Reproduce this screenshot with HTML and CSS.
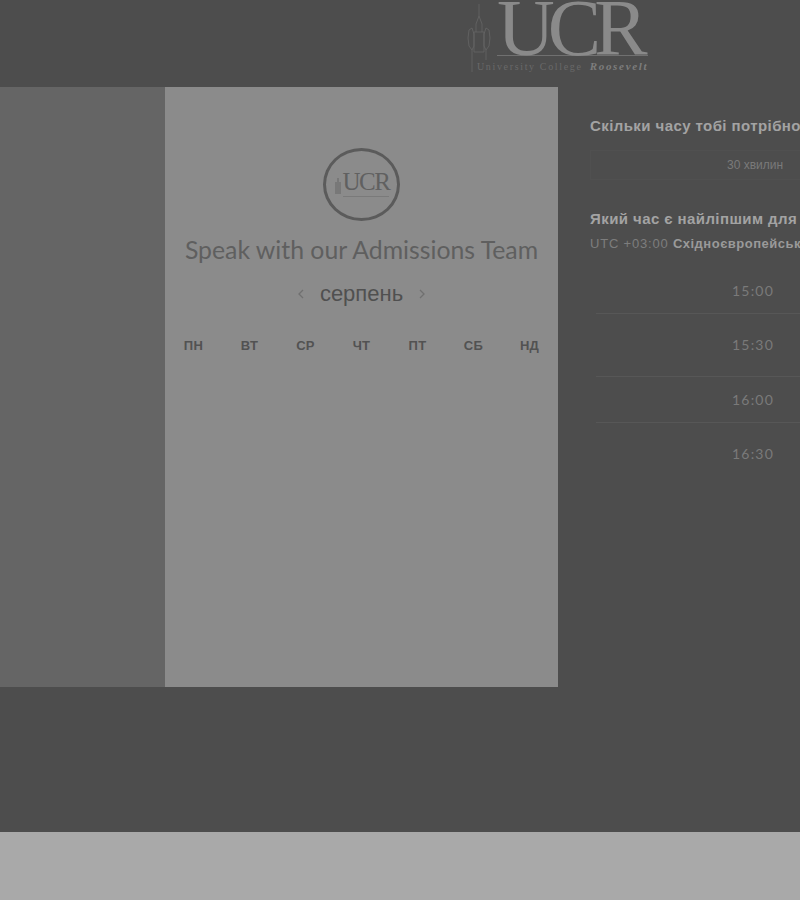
FILE: index.html
```html
<!DOCTYPE html>
<html lang="uk">
<head>
    <meta charset="UTF-8">
    <meta name="viewport" content="width=device-width, initial-scale=1.0">
    <title>Speak with our Admissions Team</title>
    <link rel="stylesheet" href="styles.css">
</head>
<body>
    <!-- Top bar with logo -->
    <header class="site-header">
        <div class="logo">
            <svg class="logo-tower" width="28" height="72" viewBox="0 0 28 72" fill="none" stroke="#666" stroke-width="0.8">
                <path d="M12 2V14M9 22L12 14L15 22V30M9 22V30M7 30H17V50H7Z"/>
                <path d="M2 28Q0 36 2 44L5 48L7 44V32L5 26ZM22 28Q24 36 22 44L19 48L17 44V32L19 26Z"/>
                <path d="M5 48V70M19 48V58"/>
            </svg>
            <div class="logo-text">
                <div class="logo-letters">UCR</div>
                <div class="logo-name">University College <em>Roosevelt</em></div>
            </div>
        </div>
    </header>

    <main class="booking">
        <div class="side-panel"></div>

        <!-- Calendar card -->
        <section class="calendar-card">
            <div class="badge">
                <svg class="badge-tower" width="8" height="16" viewBox="0 0 8 16" fill="#787878">
                    <path d="M3 0H5V4H7V16H1V4H3Z"/>
                </svg>
                <div class="badge-text">
                    <div class="badge-letters">UCR</div>
                    <div class="badge-line"></div>
                </div>
            </div>
            <h1 class="card-title">Speak with our Admissions Team</h1>
            <div class="month-nav">
                <svg class="chevron" width="8" height="10" viewBox="0 0 8 10" fill="none" stroke="#707070" stroke-width="1.3"><path d="M6 1L2 5L6 9"/></svg>
                <span class="month-name">серпень</span>
                <svg class="chevron" width="8" height="10" viewBox="0 0 8 10" fill="none" stroke="#707070" stroke-width="1.3"><path d="M2 1L6 5L2 9"/></svg>
            </div>
            <div class="weekdays">
                <div>ПН</div>
                <div>ВТ</div>
                <div>СР</div>
                <div>ЧТ</div>
                <div>ПТ</div>
                <div>СБ</div>
                <div>НД</div>
            </div>
        </section>

        <!-- Time picker -->
        <section class="time-panel">
            <div class="question">Скільки часу тобі потрібно?</div>
            <div class="duration">30 хвилин</div>
            <div class="question question-time">Який час є найліпшим для тебе?</div>
            <div class="timezone">UTC +03:00 <b>Східноєвропейський час</b></div>
            <div class="slots">
                <div class="slot slot-first">15:00</div>
                <div class="slot slot-tall">15:30</div>
                <div class="slot slot-short">16:00</div>
                <div class="slot slot-last">16:30</div>
            </div>
        </section>
    </main>

    <div class="spacer"></div>
    <footer class="site-footer"></footer>
</body>
</html>
```

FILE: styles.css
```css
* {
    margin: 0;
    padding: 0;
    box-sizing: border-box;
}

html, body {
    height: 900px;
    overflow: hidden;
}

body {
    width: 800px;
    display: flex;
    flex-direction: column;
    background-color: #4d4d4d;
    font-family: "Liberation Sans", Arial, sans-serif;
}

/* Top bar with logo */
.site-header {
    height: 87px;
    flex: none;
    padding-left: 467px;
}

.logo {
    display: flex;
    align-items: flex-start;
}

.logo-tower {
    margin-top: 2px;
    flex: none;
}

.logo-text {
    margin-left: 2px;
    width: 151px;
}

.logo-letters {
    font-family: "Liberation Serif", serif;
    font-size: 80px;
    line-height: 56px;
    height: 56px;
    letter-spacing: -7px;
    color: #8a8a8a;
    border-bottom: 1px solid #707070;
    white-space: nowrap;
}

.logo-name {
    font-family: "Liberation Serif", serif;
    font-size: 10px;
    letter-spacing: 1.65px;
    line-height: 20px;
    margin-left: -20px;
    color: #696969;
    white-space: nowrap;
}

.logo-name em {
    font-size: 11px;
    font-weight: bold;
    color: #7d7d7d;
    letter-spacing: 1.7px;
    margin-left: 3px;
}

/* Main row */
.booking {
    height: 600px;
    flex: none;
    display: flex;
}

.side-panel {
    width: 165px;
    flex: none;
    background-color: #656565;
}

.calendar-card {
    width: 393px;
    flex: none;
    background-color: #8b8b8b;
    padding-top: 61px;
    display: flex;
    flex-direction: column;
    align-items: center;
}

.badge {
    width: 77px;
    height: 73px;
    border: 3px solid #5b5b5b;
    border-radius: 50%;
    display: flex;
    align-items: center;
    justify-content: center;
    gap: 1px;
}

.badge-tower {
    margin-top: 2px;
}

.badge-letters {
    font-family: "Liberation Serif", serif;
    font-size: 25px;
    line-height: 20px;
    letter-spacing: -1.5px;
    color: #606060;
}

.badge-line {
    height: 1px;
    margin-top: 4px;
    background-color: #7a7a7a;
}

.card-title {
    font-family: Lato, sans-serif;
    font-size: 24.8px;
    font-weight: 400;
    line-height: 30px;
    margin-top: 14px;
    color: #5f5f5f;
    white-space: nowrap;
}

.month-nav {
    display: flex;
    align-items: center;
    gap: 15px;
    margin-top: 16px;
}

.month-name {
    font-size: 22px;
    line-height: 26px;
    color: #505050;
}

.weekdays {
    width: 392px;
    display: grid;
    grid-template-columns: repeat(7, 56px);
    margin-top: 31px;
    font-size: 13px;
    font-weight: bold;
    line-height: 16px;
    letter-spacing: 0.3px;
    text-align: center;
    color: #525252;
}

/* Time picker */
.time-panel {
    width: 362px;
    flex: none;
    padding: 30px 0 0 32px;
    white-space: nowrap;
}

.question {
    font-size: 15px;
    font-weight: bold;
    line-height: 18px;
    letter-spacing: 0.42px;
    color: #a3a3a3;
}

.duration {
    height: 30px;
    margin-top: 15px;
    border: 1px solid #505050;
    font-size: 12px;
    line-height: 28px;
    text-align: center;
    color: #7a7a7a;
}

.question-time {
    margin-top: 30px;
}

.timezone {
    margin-top: 8px;
    font-size: 13px;
    line-height: 16px;
    letter-spacing: 0.8px;
    color: #7d7d7d;
}

.timezone b {
    letter-spacing: 0.5px;
    color: #9a9a9a;
}

.slots {
    width: 314px;
    margin: 12px 0 0 6px;
}

.slot {
    display: flex;
    align-items: center;
    justify-content: center;
    font-family: Lato, sans-serif;
    font-size: 14px;
    letter-spacing: 1.2px;
    color: #7a7a7a;
    border-bottom: 1px solid #575757;
}

.slot-first {
    height: 50px;
    padding-top: 3px;
}

.slot-tall {
    height: 63px;
    padding-bottom: 2px;
}

.slot-short {
    height: 46px;
}

.slot-last {
    height: 60px;
    border-bottom: 0;
}

.spacer {
    flex: 1;
}

.site-footer {
    height: 68px;
    flex: none;
    background-color: #a9a9a9;
}
```
